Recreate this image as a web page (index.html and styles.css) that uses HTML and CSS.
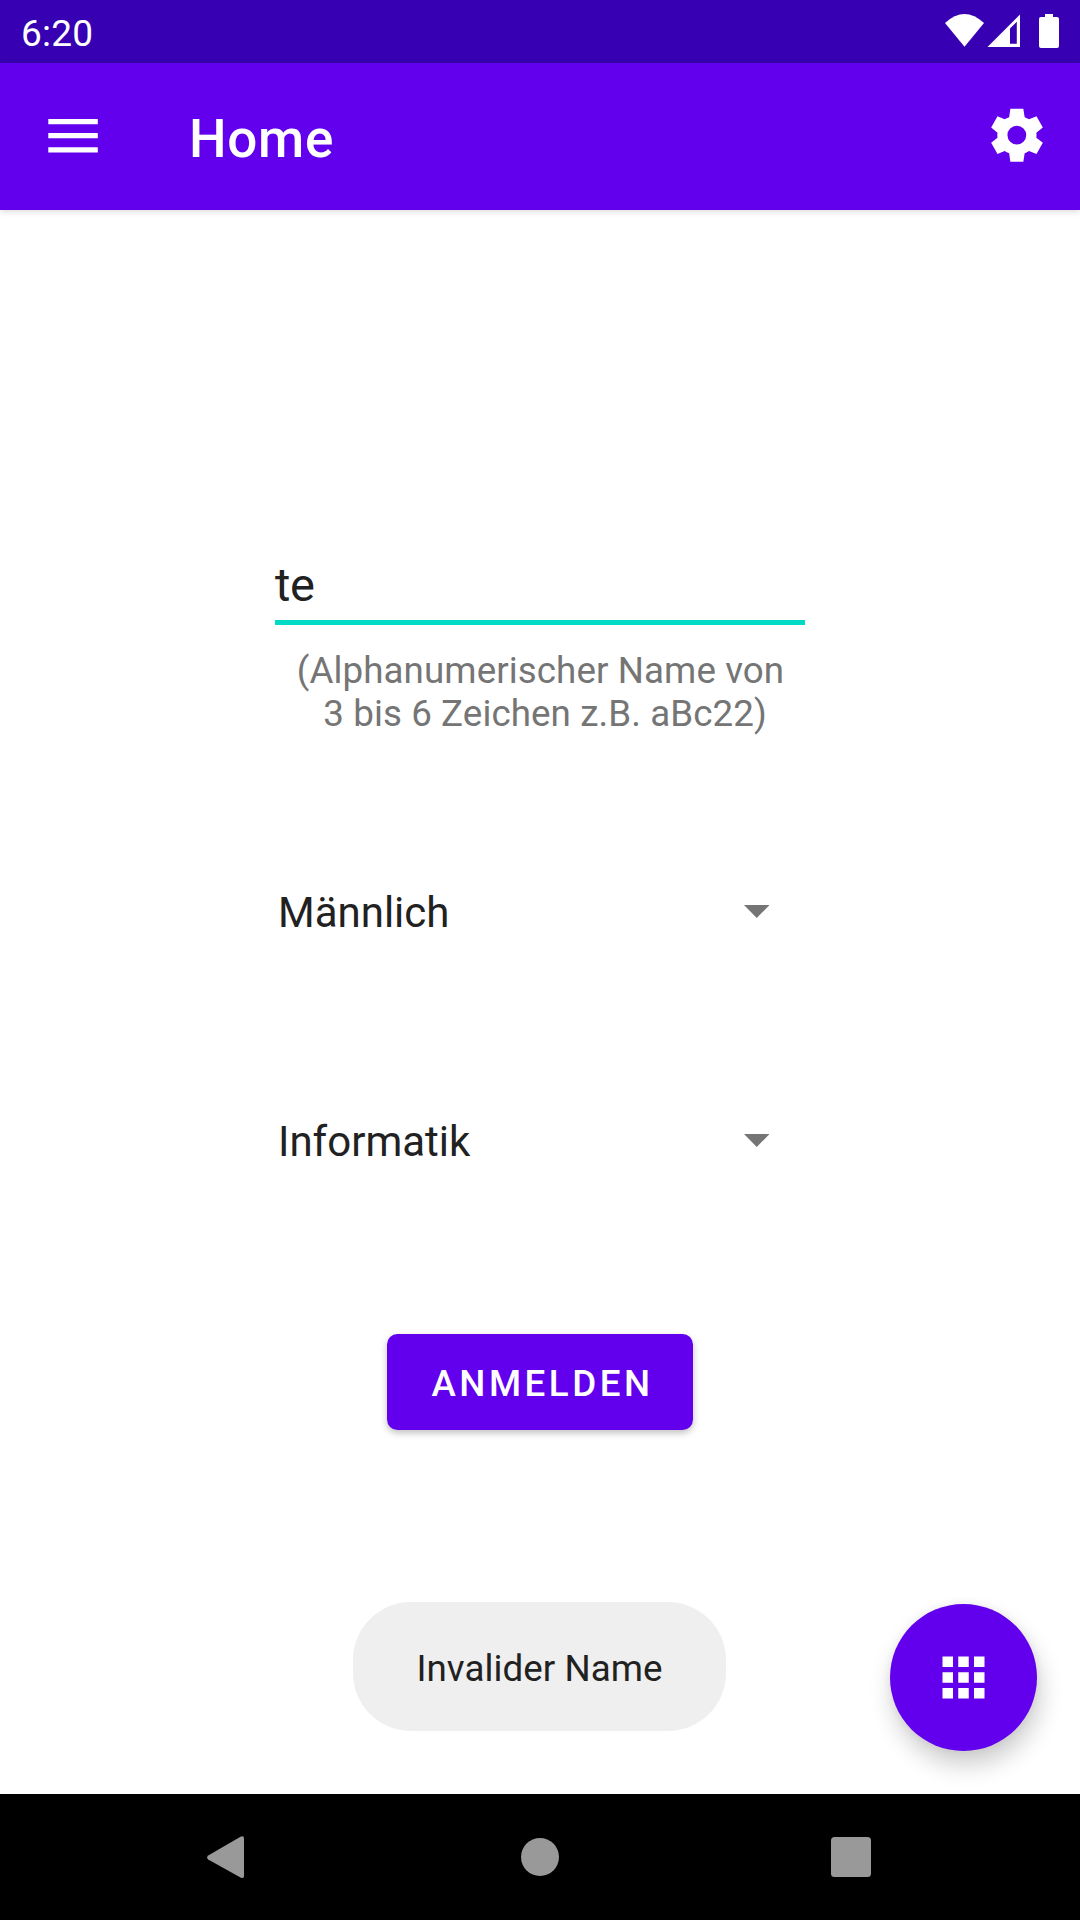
FILE: index.html
```html
<!DOCTYPE html>
<html lang="de">
<head>
<meta charset="utf-8">
<title>Home</title>
<link rel="stylesheet" href="styles.css">
</head>
<body>
<div class="screen">
  <header class="status">
    <span class="clock">6:20</span>
    <svg class="status-icons" width="116" height="36" viewBox="944 13 116 36" fill="#fff">
      <path d="M945 23Q964.500 5 984 23L964.500 46.700Z"/>
      <path fill-rule="evenodd" d="M987.500 47L1020 14.500V47ZM1010 28.500V43.700H1016.800V21.800Z"/>
      <path d="M1045 14h8v3h4q2 0 2 2v27q0 2-2 2h-16q-2 0-2-2v-27q0-2 2-2h4z"/>
    </svg>
  </header>
  <nav class="toolbar">
    <svg class="menu" width="50" height="34" viewBox="0 0 50 34" fill="#fff">
      <path d="M.3 0H49.800V5.250H.3zM.3 14.100H49.800V19.300H.3zM.3 28.200H49.800V33.400H.3z"/>
    </svg>
    <h1 class="title">Home</h1>
    <svg class="gear" width="52" height="54" viewBox="212 325 156 162" fill="#fff">
      <path fill-rule="evenodd" d="M270 327H309L313 353Q320 355.500 326 359L348.500 350L367.500 383.500L348 399Q349 406 348 414L367.500 429.500L348.500 463L326 454Q320 458.500 313 461L309 486H270L266.500 461Q259 458.500 253 454L231.500 463L212.500 429.500L231.500 414Q230.500 406 231.500 399L212.500 383.500L231.500 350L253 359Q259 355.500 266.500 353ZM289.500 378A28.300 28.300 0 1 0 289.500 434.600A28.300 28.300 0 1 0 289.500 378Z"/>
    </svg>
  </nav>
  <main class="content">
    <form class="form">
      <div class="field">te</div>
      <p class="hint">(Alphanumerischer Name von<br>&nbsp;3 bis 6 Zeichen z.B. aBc22)</p>
      <div class="spinner">
        <span>Männlich</span>
        <svg width="26" height="13" viewBox="0 0 26 13" fill="#757575"><path d="M0 0H25.500L12.750 13Z"/></svg>
      </div>
      <div class="spinner">
        <span>Informatik</span>
        <svg width="26" height="13" viewBox="0 0 26 13" fill="#757575"><path d="M0 0H25.500L12.750 13Z"/></svg>
      </div>
      <button class="submit" type="button">ANMELDEN</button>
    </form>
    <div class="toast">Invalider Name</div>
    <div class="fab">
      <svg width="63" height="63" viewBox="0 0 24 24" fill="#fff">
        <path d="M4 8h4V4H4zM10 20h4v-4h-4zM4 20h4v-4H4zM4 14h4v-4H4zM10 14h4v-4h-4zM16 4v4h4V4zM10 8h4V4h-4zM16 14h4v-4h-4zM16 20h4v-4h-4z"/>
      </svg>
    </div>
  </main>
  <footer class="navbar">
    <svg width="37" height="43" viewBox="0 0 37 43" fill="#999"><path d="M1.200 19.500L33.500 .8Q37 -.8 37 2.500V40Q37 43 33.500 41.500L1.200 23.500Q-1 21.500 1.200 19.500Z"/></svg>
    <svg class="home" width="38" height="38" viewBox="0 0 38 38" fill="#999"><circle cx="19" cy="19" r="19"/></svg>
    <svg width="40" height="40" viewBox="0 0 40 40" fill="#999"><rect width="40" height="40" rx="3.500"/></svg>
  </footer>
</div>
</body>
</html>
```
FILE: styles.css
```css
* { box-sizing: border-box; margin: 0; }
body { font-family: Roboto, sans-serif; background: #fff; color: #212121; }
.screen { display: flex; flex-direction: column; width: 1080px; height: 1920px; overflow: hidden; }
svg { display: block; flex: none; }

.status {
  display: flex; justify-content: space-between; align-items: flex-start;
  height: 63px; padding: 13px 20px 0 21px; background: #3700b3; color: #fff;
}
.clock { font-size: 37px; line-height: 41px; letter-spacing: .2px; }

.toolbar {
  position: relative; display: flex; align-items: flex-start;
  height: 147px; padding: 46px 37px 0 48px; background: #6200ee; color: #fff;
  box-shadow: 0 1px 7px rgba(0, 0, 0, .17);
}
.menu { margin-top: 10px; }
.gear { margin-top: -1px; }
.title {
  margin: 0 auto 0 91px;
  font-size: 53px; line-height: 60px; font-weight: 500; letter-spacing: .7px;
}

.content { position: relative; flex: 1; }
.form { display: flex; flex-direction: column; width: 530px; margin: 0 auto; padding-top: 341px; }
.field {
  height: 74px; border-bottom: 5px solid #03dac5;
  font-size: 47px; line-height: 68px; letter-spacing: -.5px;
}
.hint {
  margin-top: 24px; padding-left: 1px; color: #757575; text-align: center;
  font-size: 36.75px; line-height: 43px; letter-spacing: .08px; white-space: nowrap;
}
.spinner {
  display: flex; justify-content: space-between; align-items: center;
  height: 63px; padding: 0 35.5px 0 3px; margin-top: 145px;
  font-size: 42px; line-height: 63px;
}
.spinner span { padding-top: 2px; }
.spinner + .spinner { margin-top: 166px; }
.submit {
  align-self: center; width: 306px; height: 96px; margin-top: 162px; padding: 3px 0 0 5px;
  border: 0; border-radius: 10.5px; background: #6200ee; color: #fff;
  font: 500 36.75px/93px Roboto, sans-serif; letter-spacing: 3.5px;
  box-shadow: 0 3px 7px rgba(0, 0, 0, .25);
}
.toast {
  position: absolute; left: 353px; top: 1392px; width: 373px; height: 129px;
  border-radius: 58px; background: #efefef; color: #212121;
  font-size: 36.75px; line-height: 134px; text-align: center; letter-spacing: .05px;
}
.fab {
  position: absolute; right: 43px; bottom: 43px; width: 147px; height: 147px;
  display: grid; place-items: center; border-radius: 50%; background: #6200ee;
  box-shadow: 3px 14px 24px rgba(0, 0, 0, .2), 0 0 10px rgba(0, 0, 0, .06);
}
.navbar {
  position: relative; display: grid; grid-template-columns: 1fr auto 1fr; align-items: center;
  height: 126px; padding: 0 209px 0 207px; background: #000;
}
.navbar .home { margin: 0 0 0 2px; }
.navbar svg:last-child { justify-self: end; }
```
